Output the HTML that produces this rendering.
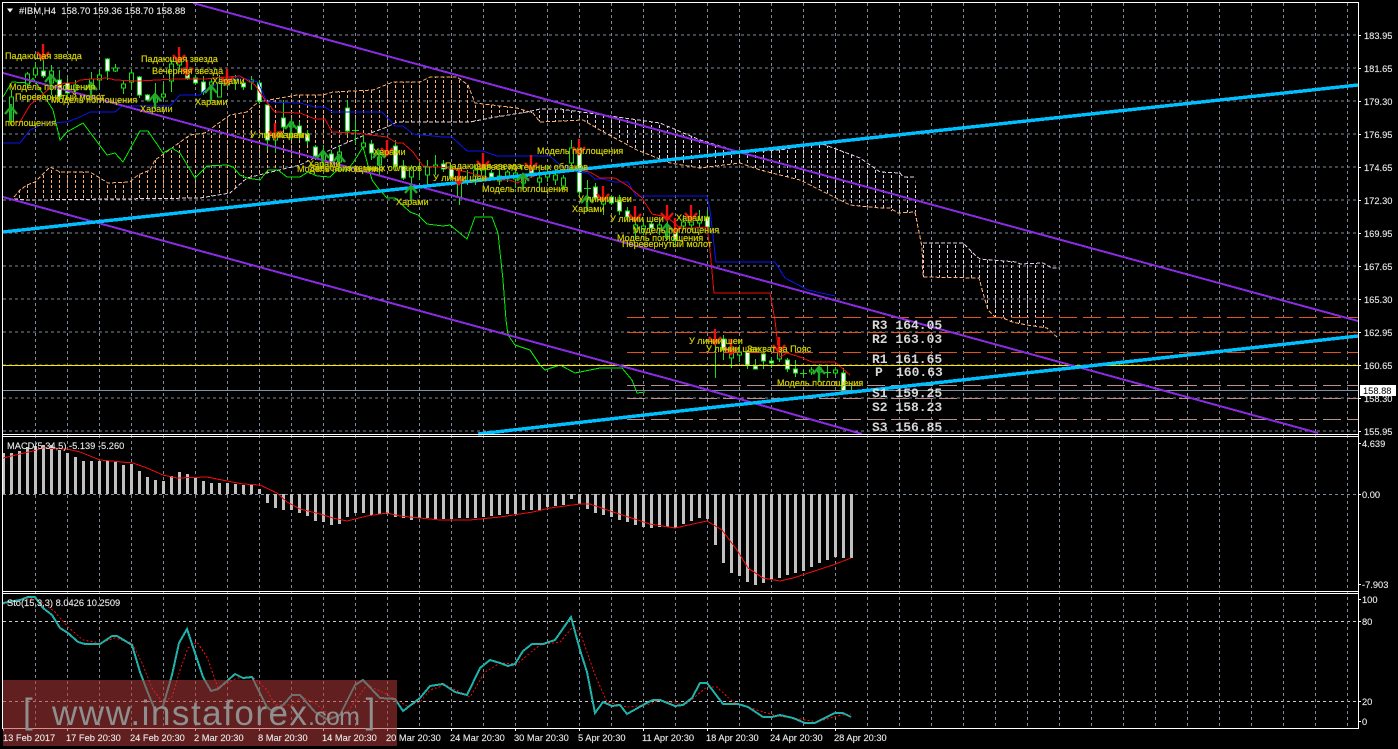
<!DOCTYPE html>
<html><head><meta charset="utf-8"><style>
html,body{margin:0;padding:0;background:#000;width:1398px;height:749px;overflow:hidden}
svg{display:block}
text{font-family:"Liberation Sans","Noto Sans CJK SC",sans-serif}
.l text{font-size:9.1px;fill:#e8e800;stroke:#a8a800;stroke-width:.25}
.a text{font-size:9.3px;fill:#f4f4f4;stroke:#c8c8c8;stroke-width:.15}
.p text{font-family:"Liberation Mono",monospace;font-size:13px;font-weight:bold;fill:#d8d8d8}
.c{shape-rendering:crispEdges}
</style></head><body>
<svg width="1398" height="749" viewBox="0 0 1398 749" xmlns="http://www.w3.org/2000/svg">
<defs>
<clipPath id="cs"><polygon points="14,197 20,190 27,185 35,182 50,167 60,172 90,172 100,178 108,183 130,182 138,175 150,170 155,160 165,153 190,135 205,133 230,115 247,112 258,102 297,95 323,95 333,92 373,90 393,82 420,82 430,77 457,77 468,85 475,103 517,108 530,112 490,118 470,122 397,122 387,127 360,137 330,150 300,165 267,173 247,178 230,193 200,198 30,200"/></clipPath>
<clipPath id="ct"><polygon points="530,112 560,109 660,123 700,140 740,152 780,150 820,143 860,158 880,172 900,173 903,177 915,177 917,200 916,212 898,213 880,208 850,205 800,180 760,170 740,163 700,168 670,163 637,150 600,130 583,120 540,122"/><polygon points="923,243 963,243 975,255 980,259 1017,262 1020,264 1043,263 1052,268 1059,268 1060,338 1047,328 1027,325 1012,322 1003,318 995,317 988,310 983,293 979,278 923,277"/></clipPath>
<g id="dn"><path d="M0 0V15M-6 8L0 15L6 8" fill="none" stroke="#ee1010" stroke-width="2.4"/></g>
<g id="up"><path d="M0 15V0M-6 7L0 0L6 7" fill="none" stroke="#22a82a" stroke-width="2.4"/></g>
</defs>
<rect width="1398" height="749" fill="#000"/>
<g class="c" fill="none">
<path stroke="#7d8a97" stroke-dasharray="3 3" d="M3 35H1358M3 68H1358M3 101H1358M3 134H1358M3 167H1358M3 200H1358M3 233H1358M3 266H1358M3 299H1358M3 332H1358M3 365H1358M3 398H1358M3 431H1358M3 494.5H1358"/>
<path stroke="#c8c8c8" stroke-dasharray="3 3" d="M3 621.5H1358M3 701.5H1358"/>
<path stroke="#7d8a97" stroke-dasharray="3 3" d="M35.5 3V728M67.5 3V728M99.5 3V728M131.5 3V728M163.5 3V728M195.5 3V728M227.5 3V728M259.5 3V728M291.5 3V728M323.5 3V728M355.5 3V728M387.5 3V728M419.5 3V728M451.5 3V728M483.5 3V728M515.5 3V728M547.5 3V728M579.5 3V728M611.5 3V728M643.5 3V728M675.5 3V728M707.5 3V728M739.5 3V728M771.5 3V728M803.5 3V728M835.5 3V728M867.5 3V728M899.5 3V728M931.5 3V728M963.5 3V728M995.5 3V728M1027.5 3V728M1059.5 3V728M1091.5 3V728M1123.5 3V728M1155.5 3V728M1187.5 3V728M1219.5 3V728M1251.5 3V728M1283.5 3V728M1315.5 3V728M1347.5 3V728"/>
</g>
<g class="c">
<g clip-path="url(#cs)"><path fill="none" stroke="#ffb070" stroke-dasharray="3 2" d="M19.5 70v135m8-135v135m8-135v135m8-135v135m8-135v135m8-135v135m8-135v135m8-135v135m8-135v135m8-135v135m8-135v135m8-135v135m8-135v135m8-135v135m8-135v135m8-135v135m8-135v135m8-135v135m8-135v135m8-135v135m8-135v135m8-135v135m8-135v135m8-135v135m8-135v135m8-135v135m8-135v135m8-135v135m8-135v135m8-135v135m8-135v135m8-135v135m8-135v135m8-135v135m8-135v135m8-135v135m8-135v135m8-135v135m8-135v135m8-135v135m8-135v135m8-135v135m8-135v135m8-135v135m8-135v135m8-135v135m8-135v135m8-135v135m8-135v135m8-135v135m8-135v135m8-135v135m8-135v135m8-135v135m8-135v135m8-135v135m8-135v135m8-135v135m8-135v135m8-135v135m8-135v135m8-135v135m8-135v135m8-135v135"/></g>
<g clip-path="url(#ct)"><path fill="none" stroke="#e6cfe6" stroke-dasharray="3 2" d="M531.5 105v235m8-235v235m8-235v235m8-235v235m8-235v235m8-235v235m8-235v235m8-235v235m8-235v235m8-235v235m8-235v235m8-235v235m8-235v235m8-235v235m8-235v235m8-235v235m8-235v235m8-235v235m8-235v235m8-235v235m8-235v235m8-235v235m8-235v235m8-235v235m8-235v235m8-235v235m8-235v235m8-235v235m8-235v235m8-235v235m8-235v235m8-235v235m8-235v235m8-235v235m8-235v235m8-235v235m8-235v235m8-235v235m8-235v235m8-235v235m8-235v235m8-235v235m8-235v235m8-235v235m8-235v235m8-235v235m8-235v235m8-235v235m8-235v235m8-235v235m8-235v235m8-235v235m8-235v235m8-235v235m8-235v235m8-235v235m8-235v235m8-235v235m8-235v235m8-235v235m8-235v235m8-235v235m8-235v235m8-235v235m8-235v235"/></g>
<g fill="none" stroke-dasharray="4 2">
<polyline stroke="#ffb070" points="14,197 20,190 27,185 35,182 50,167 60,172 90,172 100,178 108,183 130,182 138,175 150,170 155,160 165,153 190,135 205,133 230,115 247,112 258,102 297,95 323,95 333,92 373,90 393,82 420,82 430,77 457,77 468,85 475,103 517,108 533,113 540,122 583,120 600,130 637,150 670,163 700,168 740,163 760,170 800,180 850,205 880,208 890,208 898,213 915,212 922,247 923,277 979,278 983,293 988,310 995,317 1003,318 1012,322 1027,325 1047,328 1058,338"/>
<polyline stroke="#e6cfe6" points="14,199 30,200 200,198 230,193 247,178 267,173 300,165 330,150 360,137 387,127 397,122 470,122 490,118 527,112 540,109 560,109 660,123 700,140 740,152 780,150 820,143 860,158 880,172 900,173 903,177 915,177"/>
<polyline stroke="#e6cfe6" points="923,243 963,243 975,255 980,259 1017,262 1020,264 1043,263 1052,268 1059,268"/>
</g>
<polyline fill="none" stroke="#00f000" points="3,97 12,82 30,83 33,78 53,110 60,140 67,132 83,123 107,155 115,153 123,162 140,131 148,131 163,153 172,148 180,153 195,178 207,166 227,165 233,167 240,175 247,178 260,180 268,170 278,170 287,177 300,177 308,172 317,176 330,177 337,170 347,170 353,163 363,147 372,180 378,188 387,198 395,198 410,212 418,215 427,224 443,226 450,225 467,239 475,217 492,217 498,233 503,280 506,320 508,335 515,345 530,350 540,365 545,370 560,365 575,373 600,368 622,368 632,380 637,393 645,392"/>
<path fill="none" stroke="#18e018" d="M11.5 90V125M27.5 72V88M35.5 62V78M43.5 50V78M51.5 65V95M59.5 70V100M67.5 78V98M75.5 80V95M91.5 72V95M99.5 70V88M107.5 58V80M115.5 64V72M123.5 80V94M131.5 70V90M139.5 76V98M147.5 94V101M155.5 83V105M163.5 84V100M171.5 60V92M179.5 55V70M187.5 62V80M195.5 75V85M203.5 76V95M211.5 78V90M219.5 75V97M227.5 70V88M235.5 75V90M243.5 78V90M251.5 76V90M259.5 80V104M267.5 105V150M275.5 127V153M283.5 100V130M291.5 118V140M299.5 122V140M307.5 130V145M315.5 145V160M323.5 145V168M331.5 150V165M339.5 145V170M347.5 100V135M355.5 120V145M363.5 135V150M371.5 140V160M379.5 150V175M395.5 140V170M403.5 160V180M411.5 165V190M419.5 160V180M427.5 160V185M435.5 155V175M443.5 160V172M451.5 165V180M459.5 170V205M467.5 170V185M475.5 165V185M483.5 165V180M491.5 170V180M499.5 170V185M507.5 170V182M515.5 170V188M523.5 175V190M531.5 160V178M539.5 170V190M547.5 165V182M555.5 170V185M563.5 175V190M571.5 140V170M579.5 140V195M587.5 180V200M595.5 183V200M603.5 195V215M611.5 195V205M619.5 195V215M627.5 207V222M635.5 215V240M643.5 222V235M651.5 222V232M659.5 222V235M667.5 215V240M675.5 222V245M683.5 215V230M691.5 215V230M699.5 210V228M707.5 210V230M715.5 333V378M723.5 335V360M731.5 340V368M739.5 345V362M747.5 350V369M755.5 359V369M763.5 352V369M771.5 357V368M779.5 337V362M787.5 358V372M795.5 360V377M803.5 370V377M811.5 367V375M819.5 364V376M827.5 366V378M835.5 367V376M843.5 368V392M851.5 383V392M584 188.5H591M800 373.5H807M824 372.5H831M352 130.5H359"/>
<path fill="#000" stroke="#18e018" d="M9.5 97h4v25h-4zM25.5 74h4v10h-4zM33.5 68h4v7h-4zM49.5 71h4v12h-4zM73.5 85h4v5h-4zM89.5 79h4v10h-4zM97.5 75h4v5h-4zM113.5 68h4v3h-4zM121.5 84h4v4h-4zM129.5 73h4v9h-4zM153.5 98h4v4h-4zM161.5 94h4v3h-4zM169.5 64h4v17h-4zM177.5 62h4v3h-4zM209.5 82h4v3h-4zM217.5 83h4v14h-4zM233.5 78h4v2h-4zM249.5 80h4v2h-4zM273.5 133h4v7h-4zM289.5 122h4v5h-4zM321.5 153h4v8h-4zM337.5 152h4v10h-4zM361.5 143h4v4h-4zM377.5 157h4v8h-4zM409.5 168h4v9h-4zM425.5 167h4v8h-4zM433.5 165h4v2h-4zM457.5 183h4v14h-4zM473.5 170h4v6h-4zM481.5 170h4v6h-4zM497.5 176h4v5h-4zM505.5 172h4v4h-4zM513.5 173h4v6h-4zM521.5 178h4v5h-4zM537.5 178h4v4h-4zM545.5 172h4v5h-4zM553.5 175h4v5h-4zM561.5 178h4v8h-4zM569.5 148h4v15h-4zM601.5 198h4v6h-4zM633.5 225h4v4h-4zM641.5 226h4v3h-4zM657.5 225h4v3h-4zM665.5 232h4v6h-4zM681.5 222h4v4h-4zM689.5 222h4v3h-4zM697.5 220h4v3h-4zM729.5 347h4v11h-4zM737.5 352h4v3h-4zM777.5 350h4v9h-4zM809.5 370h4v2h-4zM817.5 368h4v4h-4zM833.5 370h4v3h-4z"/>
<path fill="#fff" stroke="#18e018" d="M41.5 71h4v5h-4zM57.5 80h4v17h-4zM65.5 83h4v10h-4zM105.5 59h4v12h-4zM137.5 77h4v18h-4zM145.5 95h4v5h-4zM185.5 71h4v7h-4zM193.5 78h4v5h-4zM201.5 82h4v10h-4zM225.5 79h4v6h-4zM241.5 83h4v4h-4zM257.5 83h4v18h-4zM265.5 105h4v35h-4zM281.5 118h4v9h-4zM297.5 126h4v8h-4zM305.5 134h4v7h-4zM313.5 147h4v9h-4zM329.5 154h4v8h-4zM345.5 108h4v23h-4zM369.5 144h4v9h-4zM393.5 146h4v20h-4zM401.5 166h4v12h-4zM441.5 164h4v5h-4zM449.5 169h4v9h-4zM489.5 173h4v4h-4zM529.5 167h4v6h-4zM577.5 148h4v44h-4zM593.5 187h4v11h-4zM609.5 197h4v6h-4zM617.5 200h4v11h-4zM625.5 211h4v6h-4zM649.5 224h4v4h-4zM673.5 232h4v8h-4zM705.5 217h4v10h-4zM721.5 339h4v11h-4zM745.5 352h4v13h-4zM753.5 366h4v3h-4zM761.5 354h4v7h-4zM769.5 361h4v2h-4zM785.5 360h4v9h-4zM793.5 369h4v4h-4zM841.5 373h4v18h-4z"/>
<polyline fill="none" stroke="#0a14f0" points="3,143 20,143 30,130 45,123 67,122 80,117 90,112 115,112 122,106 170,106 180,95 200,95 205,90 225,80 230,78 243,78 250,80 258,82 267,102 300,103 315,107 325,107 332,112 382,112 395,126 403,126 413,134 443,137 452,137 467,151 483,151 497,156 550,156 560,165 578,172 588,173 595,179 603,179 615,182 628,182 636,196 707,196 710,210 716,262 775,262 785,278 808,290 835,296"/>
<polyline fill="none" stroke="#f40a0a" points="10,122 20,122 30,105 50,88 65,83 75,83 80,80 107,78 115,80 139,81 175,79 205,79 215,78 240,76 255,85 265,100 275,112 300,113 315,119 325,119 332,132 355,133 387,137 397,143 403,143 413,152 423,166 440,167 447,168 467,172 497,180 510,180 517,183 537,175 577,170 590,172 600,178 615,178 628,186 642,198 652,214 667,217 680,228 693,228 707,227 710,250 714,293 770,293 775,320 778,347 780,357 787,353 800,357 812,362 835,362 850,375"/>
</g>
<g class="c" fill="none">
<path stroke="#e0521a" stroke-dasharray="18 6" d="M627 317.5H1358M627 332.5H1358M627 352.5H1358"/>
<path stroke="#b99090" stroke-dasharray="18 6" d="M627 385.5H1358M627 398.5H1358M627 419.5H1358"/>
<path stroke="#ffe800" d="M3 365.5H1358"/>
<path stroke="#7f92a4" d="M3 390.5H1358"/>
</g>
<g class="c" fill="none" stroke="#8a2be2" stroke-width="2">
<path d="M193 3L1358 321"/>
<path d="M3 73L370 173L750 277L1318 433"/>
<path d="M3 197L680 382L862 434"/>
</g>
<g class="c" fill="none" stroke="#00bfff" stroke-width="3.4">
<path d="M3 232L1358 85"/>
<path d="M478 434L680 411L1080 367L1358 336"/>
</g>
<g>
<use href="#dn" x="43" y="44"/><use href="#dn" x="179" y="47"/><use href="#dn" x="187" y="60"/><use href="#dn" x="227" y="69"/><use href="#dn" x="275" y="123"/><use href="#dn" x="387" y="140"/><use href="#dn" x="459" y="169"/><use href="#dn" x="483" y="153"/><use href="#dn" x="531" y="155"/><use href="#dn" x="579" y="139"/><use href="#dn" x="603" y="186"/><use href="#dn" x="635" y="206"/><use href="#dn" x="667" y="205"/><use href="#dn" x="675" y="218"/><use href="#dn" x="691" y="205"/><use href="#dn" x="715" y="329"/><use href="#dn" x="731" y="339"/><use href="#dn" x="779" y="337"/>
<path d="M11 122V104" stroke="#22a82a" stroke-width="2.4"/>
<use href="#up" x="11" y="107"/><use href="#up" x="51" y="75"/><use href="#up" x="91" y="83"/><use href="#up" x="155" y="94"/><use href="#up" x="211" y="86"/><use href="#up" x="291" y="122"/><use href="#up" x="323" y="151"/><use href="#up" x="339" y="155"/><use href="#up" x="379" y="151"/><use href="#up" x="411" y="186"/><use href="#up" x="523" y="174"/><use href="#up" x="587" y="196"/><use href="#up" x="667" y="224"/><use href="#up" x="819" y="367"/>
</g>
<g class="l">
<text x="5" y="59">Падающая звезда</text>
<text x="141" y="62">Падающая звезда</text>
<text x="152" y="74">Вечерняя звезда</text>
<text x="9" y="90">Модель поглощения</text>
<text x="15" y="100">Перевернутый молот</text>
<text x="51" y="103">Модель поглощения</text>
<text x="5" y="126">поглощения</text>
<text x="140" y="112">Харами</text>
<text x="195" y="105">Харами</text>
<text x="212" y="84">Харами</text>
<text x="250" y="138">У линии шеи</text>
<text x="277" y="138">Харами</text>
<text x="308" y="167">Харами</text>
<text x="297" y="172">Модель поглощения</text>
<text x="422" y="171" text-anchor="end">Завеса из темных облаков</text>
<text x="373" y="155">Харами</text>
<text x="396" y="205">Харами</text>
<text x="433" y="181">У линии шеи</text>
<text x="445" y="169">Падающая звезда</text>
<text x="588" y="170" text-anchor="end">Завеса из темных облаков</text>
<text x="482" y="192">Модель поглощения</text>
<text x="537" y="154">Модель поглощения</text>
<text x="578" y="202">У линии шеи</text>
<text x="572" y="212">Харами</text>
<text x="610" y="222">У линии шеи</text>
<text x="676" y="221">Харами</text>
<text x="633" y="233">Модель поглощения</text>
<text x="617" y="241">Модель поглощения</text>
<text x="622" y="247">Перевернутый молот</text>
<text x="689" y="344">У линии шеи</text>
<text x="706" y="352">У линии шеи</text>
<text x="747" y="352">Захват за Пояс</text>
<text x="777" y="386">Модель поглощения</text>
</g>
<g class="p">
<text x="872" y="329">R3 164.05</text>
<text x="872" y="343">R2 163.03</text>
<text x="872" y="363">R1 161.65</text>
<text x="875" y="376">P</text><text x="896" y="376">160.63</text>
<text x="872" y="397">S1 159.25</text>
<text x="872" y="411">S2 158.23</text>
<text x="872" y="431">S3 156.85</text>
</g>
<!-- MACD -->
<path class="c" stroke="#c0c0c0" stroke-width="3" fill="none" d="M3.5 453V494M11.5 453V494M19.5 451V494M27.5 447V494M35.5 446V494M43.5 445V494M51.5 445V494M59.5 450V494M67.5 453V494M75.5 457V494M83.5 461V494M91.5 461V494M99.5 461V494M107.5 461V494M115.5 462V494M123.5 465V494M131.5 464V494M139.5 471V494M147.5 477V494M155.5 480V494M163.5 481V494M171.5 476V494M179.5 472V494M187.5 474V494M195.5 477V494M203.5 481V494M211.5 483V494M219.5 483V494M227.5 483V494M235.5 484V494M243.5 485V494M251.5 485V494M259.5 489V494M267.5 494V503M275.5 494V508M283.5 494V510M291.5 494V510M299.5 494V513M307.5 494V516M315.5 494V521M323.5 494V522M331.5 494V525M339.5 494V524M347.5 494V517M355.5 494V513M363.5 494V513M371.5 494V515M379.5 494V514M387.5 494V514M395.5 494V517M403.5 494V518M411.5 494V520M419.5 494V518M427.5 494V518M435.5 494V519M443.5 494V519M451.5 494V519M459.5 494V518M467.5 494V518M475.5 494V518M483.5 494V517M491.5 494V516M499.5 494V515M507.5 494V514M515.5 494V514M523.5 494V510M531.5 494V510M539.5 494V510M547.5 494V507M555.5 494V506M563.5 494V505M571.5 494V499M579.5 494V504M587.5 494V509M595.5 494V513M603.5 494V515M611.5 494V517M619.5 494V520M627.5 494V522M635.5 494V525M643.5 494V527M651.5 494V528M659.5 494V527M667.5 494V527M675.5 494V528M683.5 494V524M691.5 494V521M699.5 494V518M707.5 494V519M715.5 494V545M723.5 494V563M731.5 494V573M739.5 494V576M747.5 494V582M755.5 494V585M763.5 494V583M771.5 494V580M779.5 494V578M787.5 494V575M795.5 494V573M803.5 494V571M811.5 494V567M819.5 494V563M827.5 494V560M835.5 494V557M843.5 494V558M851.5 494V558"/>
<polyline class="c" fill="none" stroke="#f40a0a" points="3,458 33,451 43,448 67,449 80,452 100,460 133,463 147,468 163,475 177,478 207,477 227,481 243,484 260,485 277,493 287,502 300,509 320,514 333,518 347,521 367,516 387,513 400,516 440,520 470,520 500,517 533,512 550,508 580,504 590,504 613,512 650,524 675,528 707,521 722,530 737,550 748,568 763,578 780,581 793,578 833,565 851,558"/>
<!-- Stochastic -->
<polyline class="c" fill="none" stroke="#f40a0a" stroke-dasharray="2 2" points="3,604 33,598 43,603 55,612 68,627 83,640 100,643 115,638 132,643 142,663 153,690 163,702 172,697 180,670 188,648 197,642 207,657 218,688 237,678 253,677 267,690 275,705 292,705 302,697 315,703 333,718 347,713 358,697 367,685 382,692 397,700 407,706 420,702 430,690 445,685 460,692 470,697 485,672 500,663 517,664 530,653 540,645 560,642 572,628 580,632 595,675 607,702 627,707 647,705 660,700 685,705 707,687 717,687 733,702 760,711 777,716 800,719 817,722 837,716 851,714"/>
<polyline class="c" fill="none" stroke="#20b2aa" stroke-width="2" points="3,603 20,600 28,597 35,597 43,608 52,615 60,628 68,633 78,642 85,644 100,644 112,636 117,636 132,645 140,672 148,693 155,710 163,706 172,675 179,643 187,629 195,653 203,677 211,691 218,689 235,674 243,678 252,677 267,707 273,712 283,705 292,695 300,695 315,712 328,720 340,715 355,685 363,680 380,698 395,699 403,711 420,698 430,686 443,684 455,692 467,695 480,668 490,660 500,663 508,666 515,664 523,651 532,644 543,644 555,640 571,617 580,650 587,672 595,713 603,702 612,706 620,705 627,714 643,705 653,700 660,700 675,706 683,705 692,698 700,683 707,683 723,704 738,704 748,707 763,717 772,717 780,715 793,718 805,723 815,723 835,713 843,713 851,717"/>
<!-- frames -->
<g class="c" fill="#fff">
<rect x="2" y="2" width="1357" height="1"/>
<rect x="2" y="2" width="1" height="727"/>
<rect x="1358" y="2" width="1" height="727"/>
<rect x="2" y="434" width="1357" height="1"/>
<rect x="2" y="436" width="1357" height="1"/>
<rect x="2" y="591" width="1357" height="1"/>
<rect x="2" y="593" width="1357" height="1"/>
<rect x="2" y="728" width="1357" height="1"/>
</g>
<path class="c" stroke="#fff" fill="none" d="M1358 35.5h3M1358 68.5h3M1358 101.5h3M1358 134.5h3M1358 167.5h3M1358 200.5h3M1358 233.5h3M1358 266.5h3M1358 299.5h3M1358 332.5h3M1358 365.5h3M1358 398.5h3M1358 431.5h3M1358 443.5h3M1358 494.5h3M1358 584.5h3M1358 599.5h3M1358 621.5h3M1358 701.5h3M1358 721.5h3M3.5 728v3M67.5 728v3M131.5 728v3M195.5 728v3M259.5 728v3M323.5 728v3M387.5 728v3M451.5 728v3M515.5 728v3M579.5 728v3M643.5 728v3M707.5 728v3M771.5 728v3M835.5 728v3"/>
<rect x="3" y="680" width="394" height="66" fill="rgb(176,56,56)" fill-opacity="0.55"/>
<g fill="#8f8f8f">
<text x="23" y="723" style="font-size:35px">[</text>
<text x="52" y="725" style="font-size:35px" textLength="255">www.instaforex</text>
<text x="308" y="725" style="font-size:25px" textLength="52">.com</text>
<text x="365.5" y="723" style="font-size:35px">]</text>
</g>
<g class="a">
<path d="M7 8.5H13L10 12.5Z" fill="#fff" stroke="none"/>
<text x="19" y="14" style="font-size:9.5px">#IBM,H4 &#160;158.70 159.36 158.70 158.88</text>
<text x="7" y="449">MACD(5,34,5) -5.139 -5.260</text>
<text x="7" y="606">Sto(15,3,3) 8.0426 10.2509</text>
<text x="1364" y="39">183.95</text>
<text x="1364" y="72">181.65</text>
<text x="1364" y="105">179.30</text>
<text x="1364" y="138">176.95</text>
<text x="1364" y="171">174.65</text>
<text x="1364" y="204">172.30</text>
<text x="1364" y="237">169.95</text>
<text x="1364" y="270">167.65</text>
<text x="1364" y="303">165.30</text>
<text x="1364" y="336">162.95</text>
<text x="1364" y="369">160.65</text>
<text x="1364" y="402">158.30</text>
<text x="1364" y="435">155.95</text>
<text x="1362" y="447">4.639</text>
<text x="1362" y="498">0.00</text>
<text x="1362" y="588">-7.903</text>
<text x="1362" y="603">100</text>
<text x="1362" y="625">80</text>
<text x="1362" y="705">20</text>
<text x="1362" y="725">0</text>
<text x="3" y="741">13 Feb 2017</text>
<text x="66" y="741">17 Feb 20:30</text>
<text x="130" y="741">24 Feb 20:30</text>
<text x="194" y="741">2 Mar 20:30</text>
<text x="258" y="741">8 Mar 20:30</text>
<text x="322" y="741">14 Mar 20:30</text>
<text x="386" y="741">20 Mar 20:30</text>
<text x="450" y="741">24 Mar 20:30</text>
<text x="514" y="741">30 Mar 20:30</text>
<text x="578" y="741">5 Apr 20:30</text>
<text x="642" y="741">11 Apr 20:30</text>
<text x="706" y="741">18 Apr 20:30</text>
<text x="770" y="741">24 Apr 20:30</text>
<text x="834" y="741">28 Apr 20:30</text>
</g>
<rect class="c" x="1360" y="385" width="36" height="11" fill="#fff"/>
<text x="1363" y="394" style="font-size:9.3px" fill="#000">158.88</text>
</svg>
</body></html>
